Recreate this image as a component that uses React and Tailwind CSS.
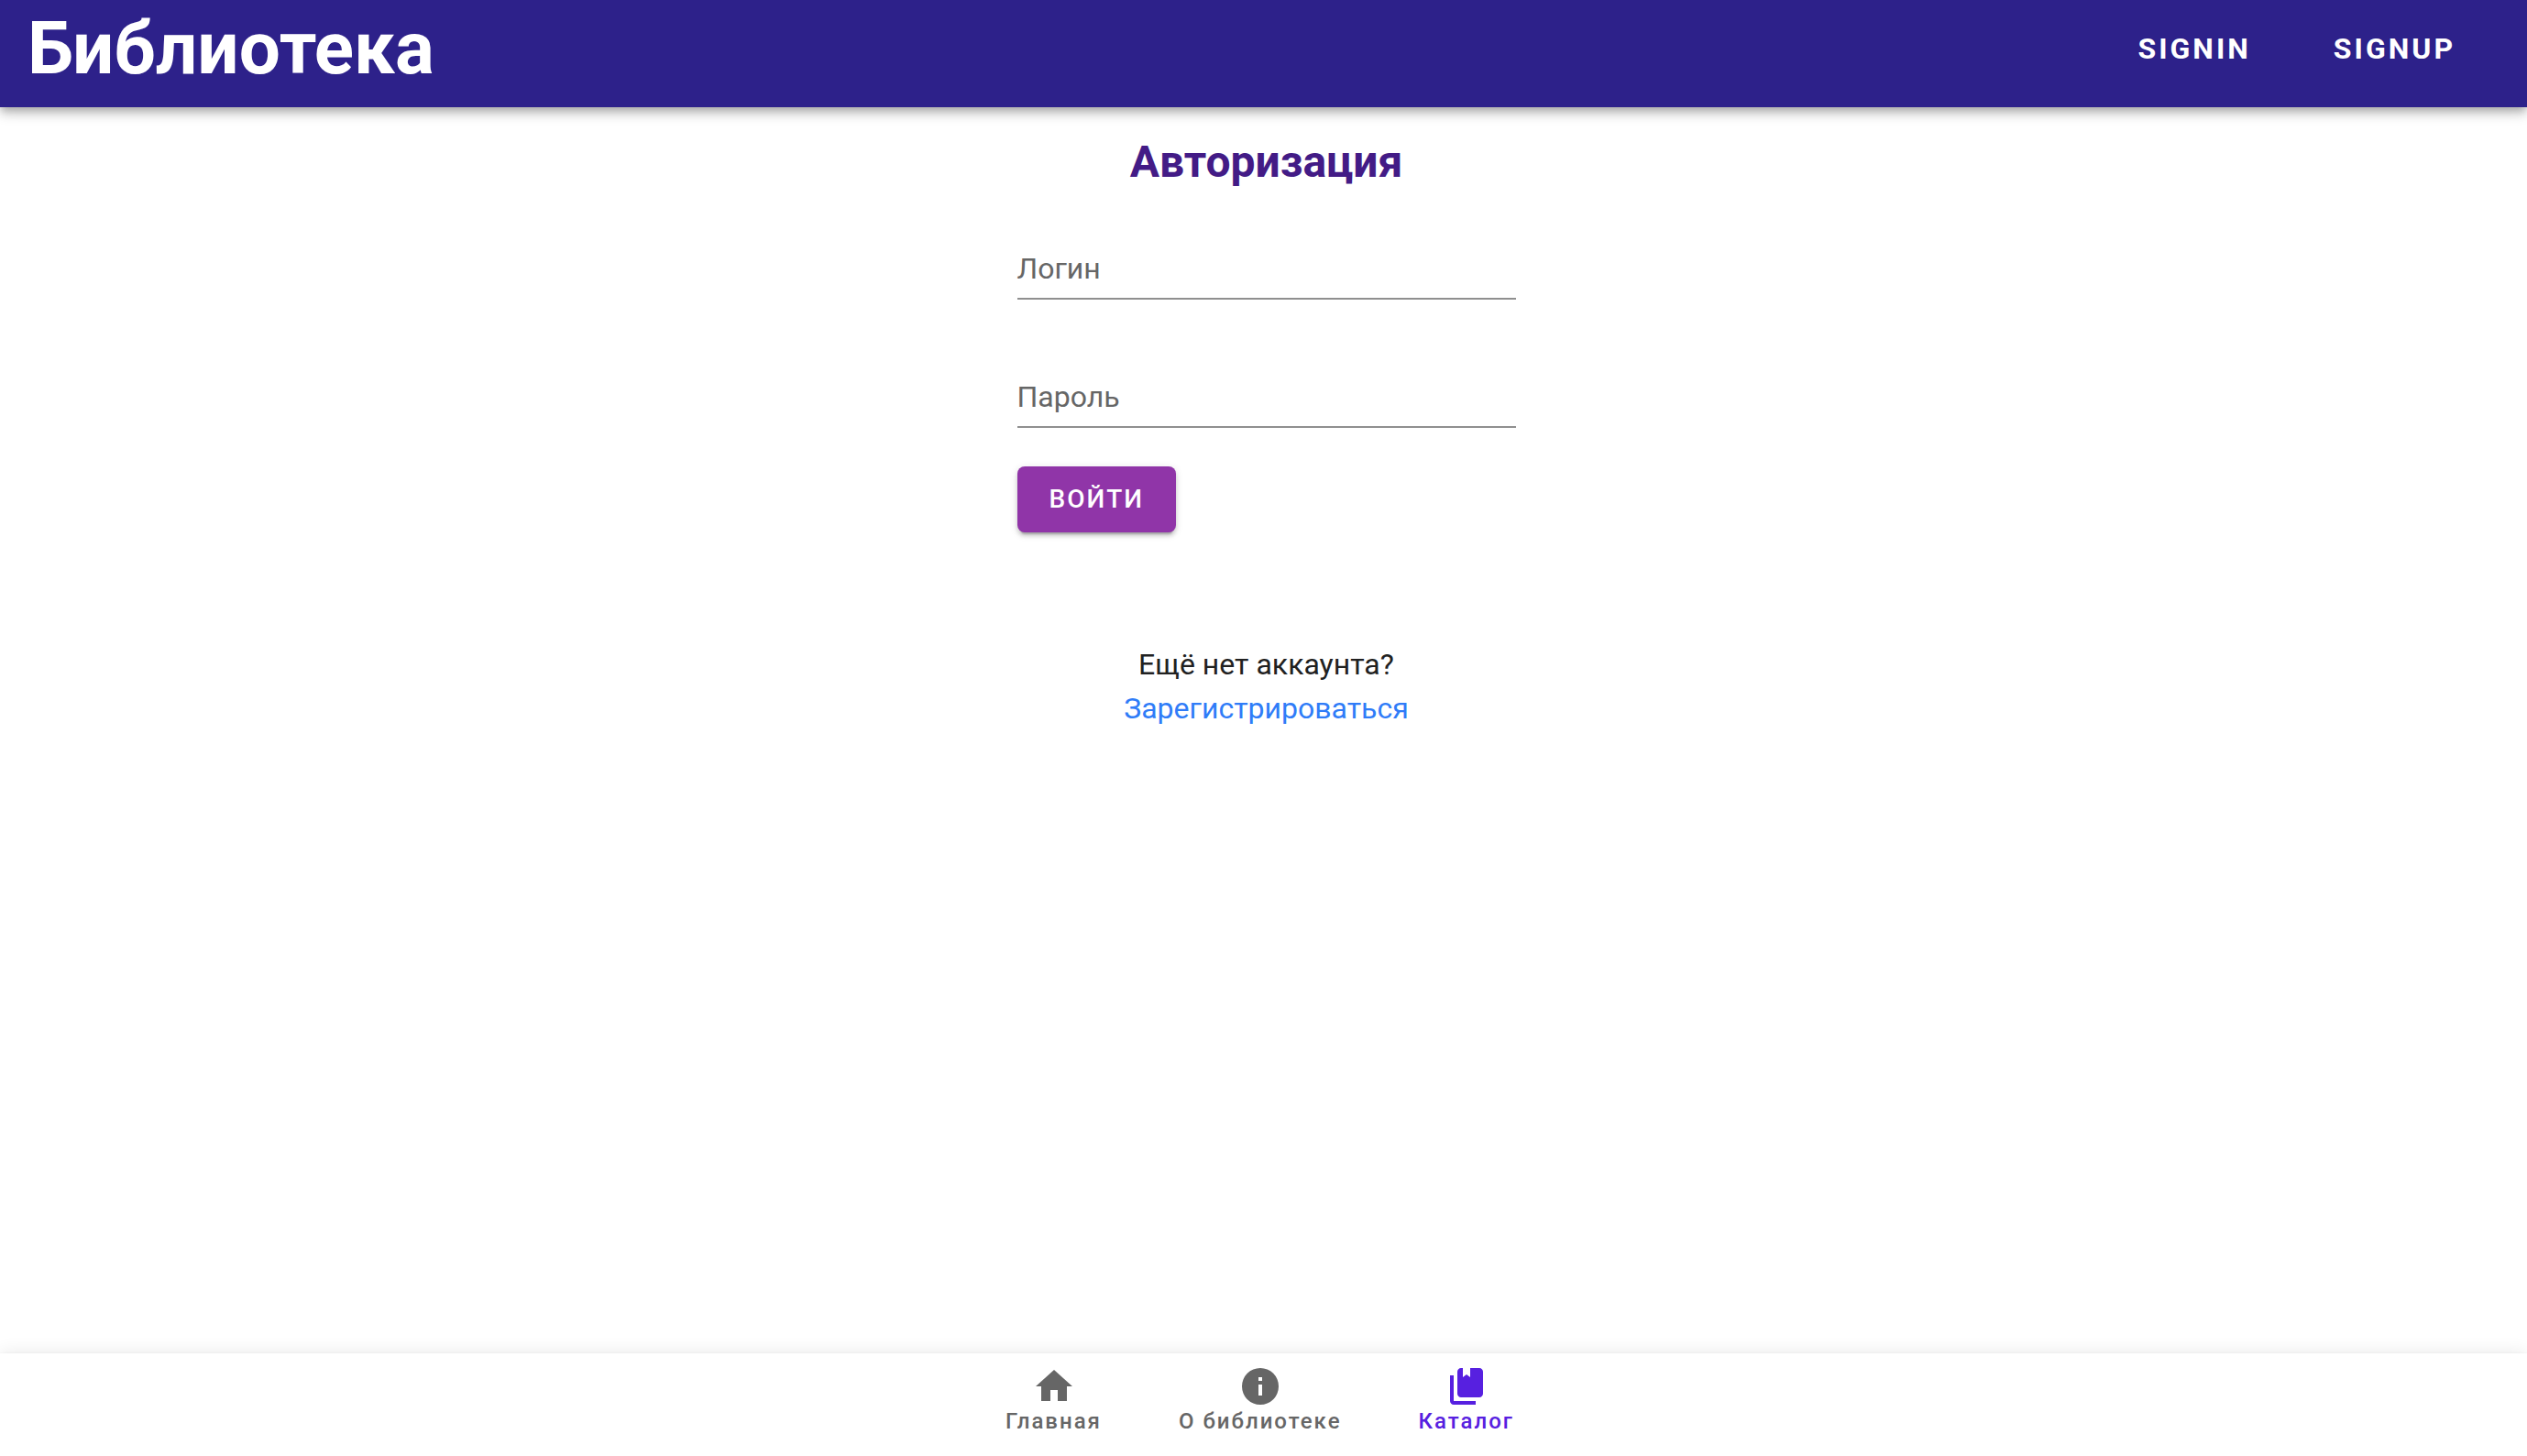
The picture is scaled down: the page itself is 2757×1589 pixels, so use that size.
import React, { useState } from "react";

const HOME = "M10 20V14H14V20H19V12H22L12 3L2 12H5V20H10Z";
const INFO =
  "M13 9H11V7H13M13 17H11V11H13M12 2A10 10 0 0 0 2 12A10 10 0 0 0 12 22A10 10 0 0 0 22 12A10 10 0 0 0 12 2Z";
const BOOKS =
  "M19 18H9C7.9 18 7 17.1 7 16V4C7 2.9 7.9 2 9 2H10V7L12 5.5L14 7V2H19C20.1 2 21 2.9 21 4V16C21 17.1 20.1 18 19 18M17 20V22H5C3.9 22 3 21.1 3 20V6H5V20H17Z";

function Field({ id, label, type }) {
  const [value, setValue] = useState("");
  return (
    <div className="grid">
      <input
        id={id}
        type={type}
        value={value}
        onChange={(e) => setValue(e.target.value)}
        className="peer col-start-1 row-start-1 w-full border-b-2 border-[#8f8f8f] bg-transparent pb-2 text-[32px] leading-[48px] text-[#212121] outline-none focus:border-[#2d218a]"
      />
      <label
        htmlFor={id}
        className={
          value
            ? "sr-only"
            : "pointer-events-none col-start-1 row-start-1 text-[32px] leading-[48px] text-[#666666] peer-focus:opacity-50"
        }
      >
        {label}
      </label>
    </div>
  );
}

function Tab({ icon, label, active }) {
  return (
    <button
      type="button"
      aria-current={active ? "page" : undefined}
      className={`flex flex-col items-center px-[42px] pt-3 ${active ? "text-[#5720e0]" : "text-[#666666]"}`}
    >
      <svg viewBox="0 0 24 24" className="size-12" fill="currentColor" aria-hidden="true">
        <path d={icon} />
      </svg>
      <span className="text-2xl leading-7 font-medium tracking-[2px]">{label}</span>
    </button>
  );
}

export default function App() {
  return (
    <div className="flex min-h-screen flex-col bg-white font-['Roboto',sans-serif] text-[#212121]">
      <header className="z-10 flex h-[117px] items-center justify-between bg-[#2d218a] pr-[78px] pb-3 pl-[30px] text-white shadow-[0_4px_8px_-2px_rgba(0,0,0,0.2),0_8px_10px_0_rgba(0,0,0,0.14),0_2px_20px_0_rgba(0,0,0,0.12)]">
        <span className="text-[80px] leading-[80px] font-bold">Библиотека</span>
        <nav className="flex gap-[90px] text-[32px] leading-10 font-bold tracking-[3px]">
          <a href="#signin">SIGNIN</a>
          <a href="#signup">SIGNUP</a>
        </nav>
      </header>

      <main className="flex flex-1 flex-col items-center pt-8 pl-1.5">
        <h1 className="text-5xl leading-[56px] font-bold text-[#431b86]">Авторизация</h1>
        <form
          className="mt-16 flex w-full max-w-[544px] flex-col"
          onSubmit={(e) => e.preventDefault()}
        >
          <div className="flex flex-col gap-[82px]">
            <Field id="login" label="Логин" type="text" />
            <Field id="password" label="Пароль" type="password" />
          </div>
          <button
            type="submit"
            className="mt-[42px] h-[72px] self-start rounded-lg bg-[#9035a8] px-[35px] text-[28px] leading-10 font-medium tracking-[2px] text-white shadow-[0_6px_2px_-4px_rgba(0,0,0,0.2),0_4px_4px_0_rgba(0,0,0,0.14),0_2px_10px_0_rgba(0,0,0,0.12)]"
          >
            ВОЙТИ
          </button>
        </form>
        <div className="mt-30 flex flex-col items-center text-[32px] leading-[48px]">
          <p>Ещё нет аккаунта?</p>
          <a href="#signup" className="text-[#2f7cf8]">
            Зарегистрироваться
          </a>
        </div>
      </main>

      <nav className="flex h-28 justify-center bg-white pr-2 shadow-[0_4px_8px_-2px_rgba(0,0,0,0.2),0_8px_10px_0_rgba(0,0,0,0.14),0_2px_20px_0_rgba(0,0,0,0.12)]">
        <Tab icon={HOME} label="Главная" />
        <Tab icon={INFO} label="О библиотеке" />
        <Tab icon={BOOKS} label="Каталог" active />
      </nav>
    </div>
  );
}
